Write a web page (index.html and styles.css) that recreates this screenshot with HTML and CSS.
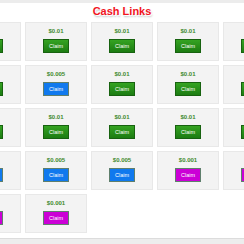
FILE: index.html
```html
<!DOCTYPE html>
<html lang="en">
<head>
    <meta charset="UTF-8">
    <meta name="viewport" content="width=device-width, initial-scale=1.0">
    <title>Cash Links</title>
    <link rel="stylesheet" href="styles.css">
</head>
<body>
    <div class="topbar"></div>
    <h1 class="title">Cash Links</h1>
    <main class="grid">
        <!-- row 1 -->
        <section class="card"><div class="price">$0.01</div><button class="claim green">Claim</button></section>
        <section class="card"><div class="price">$0.01</div><button class="claim green">Claim</button></section>
        <section class="card"><div class="price">$0.01</div><button class="claim green">Claim</button></section>
        <section class="card"><div class="price">$0.01</div><button class="claim green">Claim</button></section>
        <section class="card"><div class="price">$0.01</div><button class="claim green">Claim</button></section>
        <!-- row 2 -->
        <section class="card"><div class="price">$0.01</div><button class="claim green">Claim</button></section>
        <section class="card"><div class="price">$0.005</div><button class="claim blue">Claim</button></section>
        <section class="card"><div class="price">$0.01</div><button class="claim green">Claim</button></section>
        <section class="card"><div class="price">$0.01</div><button class="claim green">Claim</button></section>
        <section class="card"><div class="price">$0.01</div><button class="claim green">Claim</button></section>
        <!-- row 3 -->
        <section class="card"><div class="price">$0.01</div><button class="claim green">Claim</button></section>
        <section class="card"><div class="price">$0.01</div><button class="claim green">Claim</button></section>
        <section class="card"><div class="price">$0.01</div><button class="claim green">Claim</button></section>
        <section class="card"><div class="price">$0.01</div><button class="claim green">Claim</button></section>
        <section class="card"><div class="price">$0.01</div><button class="claim green">Claim</button></section>
        <!-- row 4 -->
        <section class="card"><div class="price">$0.005</div><button class="claim blue">Claim</button></section>
        <section class="card"><div class="price">$0.005</div><button class="claim blue">Claim</button></section>
        <section class="card"><div class="price">$0.005</div><button class="claim blue">Claim</button></section>
        <section class="card"><div class="price">$0.001</div><button class="claim purple">Claim</button></section>
        <section class="card"><div class="price">$0.001</div><button class="claim purple">Claim</button></section>
        <!-- row 5 -->
        <section class="card"><div class="price">$0.001</div><button class="claim purple">Claim</button></section>
        <section class="card"><div class="price">$0.001</div><button class="claim purple">Claim</button></section>
    </main>
    <footer class="bottombar"></footer>
</body>
</html>
```

FILE: styles.css
```css
* {
    box-sizing: border-box;
    margin: 0;
    padding: 0;
}
body {
    background-color: white;
    font-family: 'Liberation Sans', Arial, sans-serif;
    overflow: hidden;
}
.topbar {
    height: 3px;
    background-color: #ececec;
}
.title {
    height: 19px;
    line-height: 17px;
    text-align: center;
    font-size: 11px;
    font-weight: bold;
    color: #f2141e;
    text-shadow: 1px 1px 0 white, -1px -1px 0 white, 1px 2px 2px rgba(0, 0, 0, 0.25);
}
.grid {
    display: grid;
    grid-template-columns: repeat(5, 62px);
    grid-auto-rows: 39px;
    gap: 4px;
    margin-left: -41px;
}
.card {
    display: flex;
    flex-direction: column;
    align-items: center;
    padding-top: 5px;
    background-color: #f3f3f3;
    border: 1px solid #e8e8e8;
}
.price {
    height: 7px;
    line-height: 7px;
    margin-bottom: 4px;
    font-size: 6px;
    font-weight: bold;
    color: #3f8a2c;
}
.claim {
    width: 26px;
    height: 14px;
    line-height: 12px;
    font-family: inherit;
    font-size: 5.5px;
    color: white;
    border: 1px solid #5f7f6c;
    cursor: pointer;
}
.green {
    background: linear-gradient(#35a322, #1c7c12);
    border-color: #17620f;
}
.blue {
    background-color: #1079ee;
}
.purple {
    background-color: #cb00d6;
}
.bottombar {
    height: 6px;
    margin-top: 5px;
    background-color: #ededed;
    border-top: 1px solid #dcdcdc;
}
```
